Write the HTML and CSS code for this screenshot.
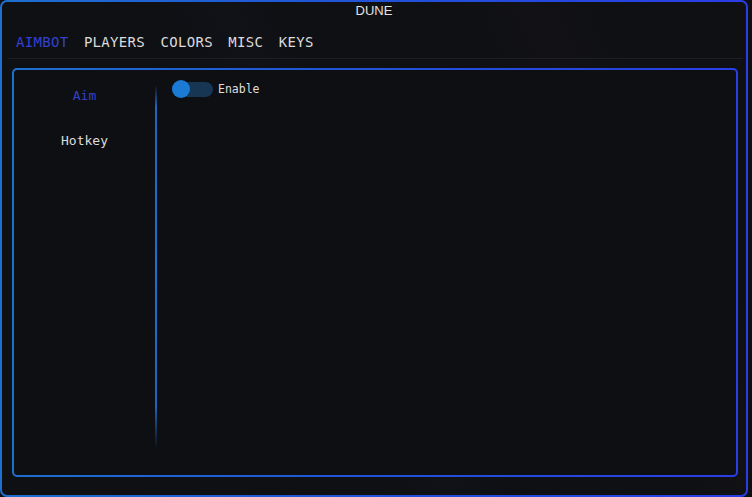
FILE: index.html
```html
<!DOCTYPE html>
<html>
<head>
<meta charset="utf-8">
<title>DUNE</title>
<link rel="stylesheet" href="styles.css">
</head>
<body>
<div class="window">
  <div class="title">DUNE</div>
  <nav class="tabs">
    <span class="tab active">AIMBOT</span>
    <span class="tab">PLAYERS</span>
    <span class="tab">COLORS</span>
    <span class="tab">MISC</span>
    <span class="tab">KEYS</span>
  </nav>
  <div class="sep"></div>
  <div class="content">
    <div class="panel">
      <aside class="sidebar">
        <div class="side-item active">Aim</div>
        <div class="side-item">Hotkey</div>
      </aside>
      <div class="divider"></div>
      <section class="main">
        <div class="toggle-row">
          <div class="toggle"><span class="knob"></span></div>
          <span class="toggle-label">Enable</span>
        </div>
      </section>
    </div>
  </div>
</div>
</body>
</html>
```
FILE: styles.css
```css
html, body {
  margin: 0;
  padding: 0;
  background: #0e0f13;
  width: 752px;
  height: 497px;
  overflow: hidden;
}

.window {
  box-sizing: border-box;
  width: 748px;
  height: 497px;
  border: 2px solid transparent;
  border-radius: 7px;
  background:
    linear-gradient(65deg, #0f1014 0%, #0f1014 40%, #111217 46%, #0f1014 52%, #0f1014 70%, #121216 78%, #0f1014 86%) padding-box,
    linear-gradient(90deg, #1e6fd0 0%, #2152d8 50%, #2a3ee6 100%) border-box;
  display: flex;
  flex-direction: column;
}

.title {
  height: 19px;
  line-height: 17px;
  text-align: center;
  color: #e2e2e2;
  font-family: "Liberation Sans", Arial, sans-serif;
  font-size: 13px;
  box-sizing: border-box;
}

.tabs {
  box-sizing: border-box;
  height: 37px;
  padding: 13px 0 0 14px;
  display: flex;
  gap: 15.5px;
  font-family: "DejaVu Sans Mono", "Liberation Mono", monospace;
  font-size: 14px;
  letter-spacing: 0.3px;
  line-height: 16px;
}

.tab {
  color: #dcdcdc;
}

.tab.active {
  color: #3441d0;
}

.sep {
  height: 1px;
  margin: 0 3px 0 5px;
  background: #1d1f24;
}

.content {
  flex: 1;
  padding: 9px 8px 18px 10px;
  display: flex;
}

.panel {
  flex: 1;
  border: 2px solid transparent;
  border-radius: 5px;
  background:
    linear-gradient(#0e0f13, #0e0f13) padding-box,
    linear-gradient(90deg, #1e6fd0 0%, #2152d8 50%, #2a3ee6 100%) border-box;
  display: flex;
}

.sidebar {
  width: 141px;
  padding-top: 18px;
  font-family: "DejaVu Sans Mono", monospace;
  font-size: 13px;
  line-height: 16px;
}

.side-item {
  height: 45px;
  text-align: center;
  color: #dcdcdc;
}

.side-item.active {
  color: #3441cc;
}

.divider {
  width: 2px;
  margin: 15px 0 26px;
  background: linear-gradient(180deg, rgba(30,111,208,0) 0%, rgba(30,111,208,0.9) 6%, #1e6fd0 50%, rgba(30,111,208,0.9) 88%, rgba(30,111,208,0) 100%);
}

.main {
  flex: 1;
  padding: 10px 0 0 15px;
}

.toggle-row {
  display: flex;
  align-items: center;
  height: 18px;
  gap: 5px;
}

.toggle {
  position: relative;
  width: 41px;
  height: 15px;
  border-radius: 8px;
  background: #163654;
}

.knob {
  position: absolute;
  left: 0;
  top: -1.5px;
  width: 18px;
  height: 18px;
  border-radius: 50%;
  background: #1b7bd4;
}

.toggle-label {
  font-family: "DejaVu Sans Mono", monospace;
  font-size: 11.5px;
  line-height: 18px;
  color: #dedede;
}
```
